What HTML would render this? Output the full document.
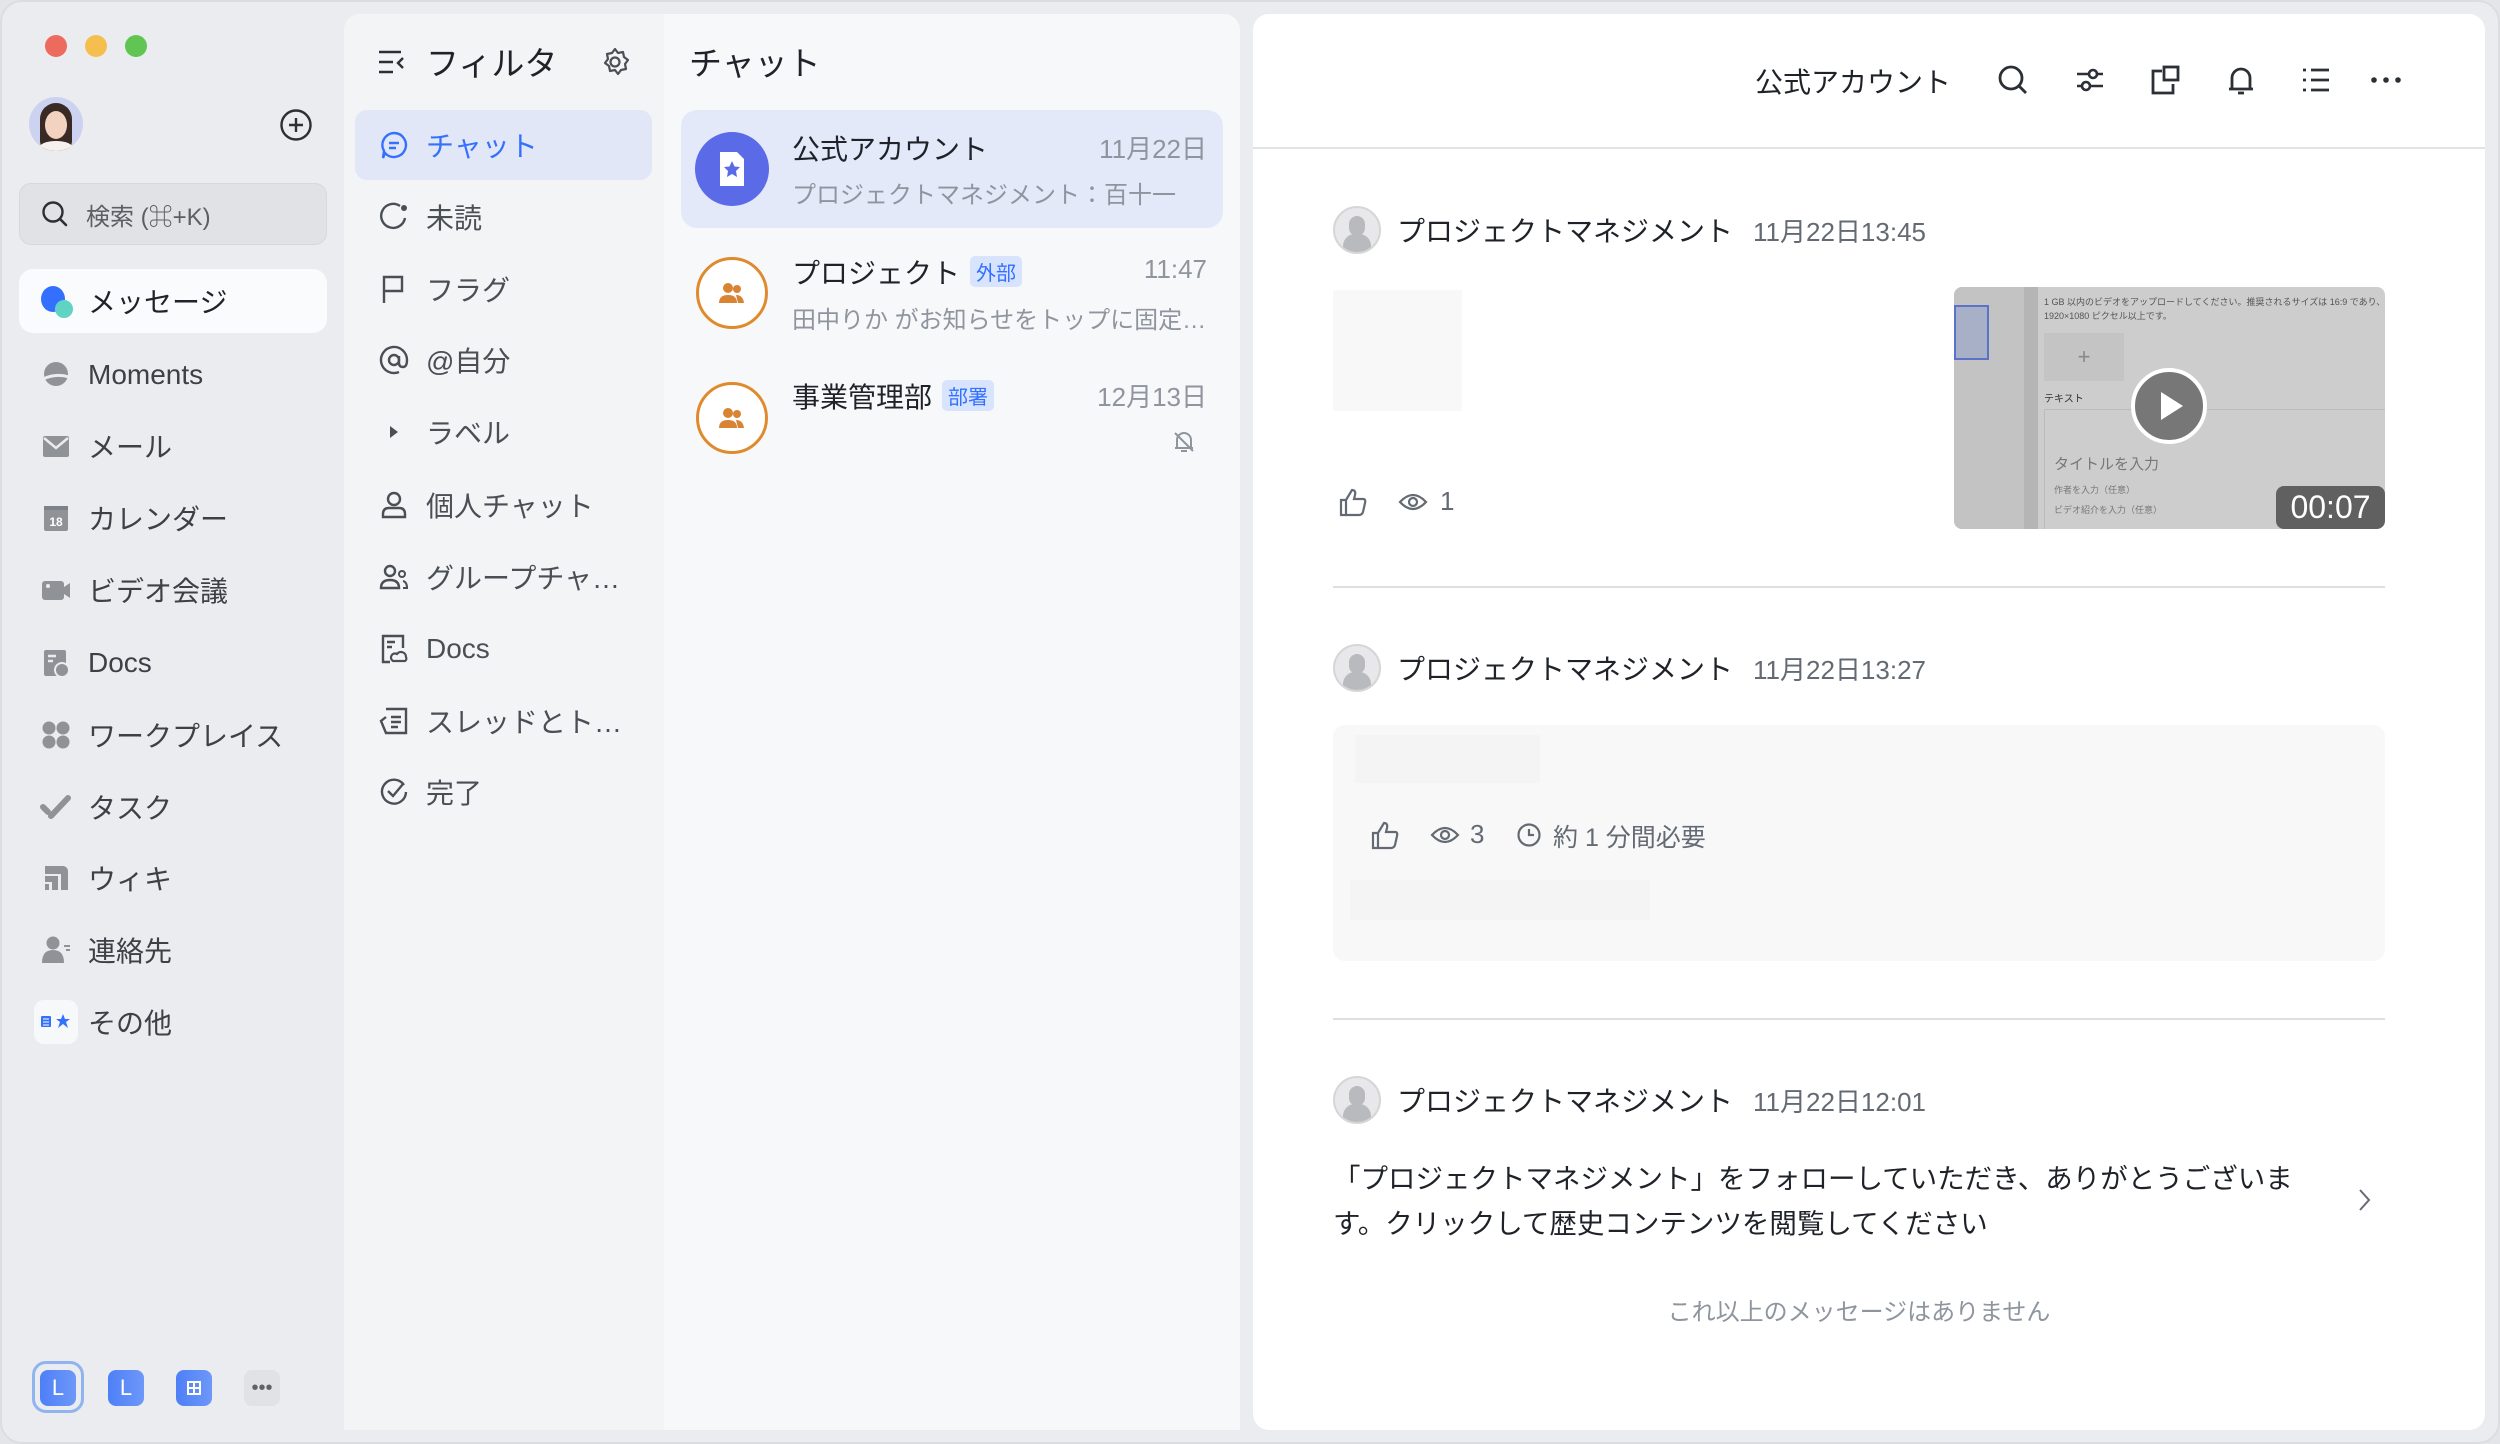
<!DOCTYPE html>
<html><head><meta charset="utf-8"><style>
*{margin:0;padding:0;box-sizing:border-box}
body{width:2500px;height:1444px;background:#e4e5e8;font-family:"Liberation Sans","Noto Sans CJK JP",sans-serif;overflow:hidden;position:relative;color:#1f2329}
.win{position:absolute;left:0;top:0;width:2500px;height:1444px;background:#ebecef;border-radius:22px;border:2px solid #dcdde0}
.a{position:absolute;white-space:nowrap}
.dot{position:absolute;width:22px;height:22px;border-radius:50%;top:35px}
.nav{position:absolute;left:88px;font-size:28px;color:#3c4047;transform:translateY(-50%)}
.ni{position:absolute;left:40px;width:32px;height:32px;transform:translateY(-50%)}
.fl{position:absolute;left:426px;font-size:28px;color:#4a4f56;transform:translateY(-50%)}
.fi{position:absolute;left:378px;width:32px;height:32px;transform:translateY(-50%)}
.tag{display:inline-block;font-size:20px;color:#3370ff;background:#d8e4fe;border-radius:5px;padding:1px 6px;vertical-align:3px;margin-left:10px}
.gray{color:#8f959e}
.hdr{position:absolute;left:1333px;height:48px;display:flex;align-items:center}
.hdr .av{width:48px;height:48px;border-radius:50%;background:#e8e8ea;border:2px solid #d6d6d8;overflow:hidden;position:relative}
.hdr .nm{font-size:28px;margin-left:16px;color:#1f2329}
.hdr .tm{font-size:26px;margin-left:20px;color:#646a73}
.sep{position:absolute;left:1333px;width:1052px;height:2px;background:#dedfe1}
svg{display:block}
</style></head><body>
<div class="win"></div>
<div class="dot" style="left:45px;background:#ed6a5e"></div>
<div class="dot" style="left:85px;background:#f5bf4f"></div>
<div class="dot" style="left:125px;background:#61c554"></div>
<div class="a" style="left:29px;top:97px;width:54px;height:54px;border-radius:50%;background:#cbd3f0;overflow:hidden">
<div style="position:absolute;left:11px;top:6px;width:32px;height:48px;border-radius:16px 16px 10px 10px;background:#3a2a25"></div>
<div style="position:absolute;left:16px;top:14px;width:22px;height:28px;border-radius:50%;background:#f3d2c0"></div>
<div style="position:absolute;left:10px;top:44px;width:34px;height:14px;border-radius:50%;background:#f6f0ee"></div></div>
<svg class="a" style="left:279px;top:108px" width="34" height="34" viewBox="0 0 34 34"><circle cx="17" cy="17" r="14.5" fill="none" stroke="#2b2f36" stroke-width="2.4"/><path d="M17 10v14M10 17h14" stroke="#2b2f36" stroke-width="2.4"/></svg>
<div class="a" style="left:19px;top:183px;width:308px;height:62px;border-radius:12px;background:#e1e2e5;border:1px solid #d7d8db"></div>
<svg class="a" style="left:40px;top:199px" width="30" height="30" viewBox="0 0 30 30"><circle cx="13" cy="13" r="9.5" fill="none" stroke="#2b2f36" stroke-width="2.4"/><path d="M20 20l6 6" stroke="#2b2f36" stroke-width="2.6" stroke-linecap="round"/></svg>
<div class="a" style="left:86px;top:197px;font-size:24px;color:#5a5f66">検索 (⌘+K)</div>
<div class="a" style="left:19px;top:269px;width:308px;height:64px;border-radius:14px;background:#fafbfc"></div>
<svg class="a" style="left:38px;top:284px" width="38" height="36" viewBox="0 0 38 36"><ellipse cx="15" cy="15" rx="12" ry="13" fill="#3370ff"/><circle cx="26" cy="25" r="9" fill="#5fd3c4"/></svg>
<div class="nav" style="top:301px;color:#1f2329">メッセージ</div>
<svg class="ni" style="top:375px" viewBox="0 0 32 32"><circle cx="16" cy="15" r="12" fill="#8f9297"/><path d="M3 20q13 -6 26 -2" stroke="#ebecef" stroke-width="3" fill="none"/></svg>
<div class="nav" style="top:375px">Moments</div>
<svg class="ni" style="top:446px" viewBox="0 0 32 32"><rect x="3" y="6" width="26" height="21" rx="2" fill="#8f9297"/><path d="M4 8l12 10 12-10" stroke="#ebecef" stroke-width="2.5" fill="none"/></svg>
<div class="nav" style="top:446px">メール</div>
<svg class="ni" style="top:518px" viewBox="0 0 32 32"><rect x="4" y="4" width="24" height="25" rx="2" fill="#8f9297"/><rect x="4" y="4" width="24" height="4" fill="#7e8187"/><text x="16" y="24" font-size="12" font-weight="bold" fill="#fff" text-anchor="middle" font-family="Liberation Sans">18</text></svg>
<div class="nav" style="top:518px">カレンダー</div>
<svg class="ni" style="top:590px" viewBox="0 0 32 32"><rect x="2" y="7" width="22" height="19" rx="3" fill="#8f9297"/><path d="M24 13l6-4v15l-6-4z" fill="#8f9297"/><circle cx="8" cy="12" r="2" fill="#ebecef"/></svg>
<div class="nav" style="top:590px">ビデオ会議</div>
<svg class="ni" style="top:663px" viewBox="0 0 32 32"><rect x="4" y="3" width="22" height="26" rx="2" fill="#8f9297"/><circle cx="22" cy="23" r="7" fill="#8f9297" stroke="#ebecef" stroke-width="2"/><path d="M8 9h8M8 14h5" stroke="#ebecef" stroke-width="2.5"/></svg>
<div class="nav" style="top:663px">Docs</div>
<svg class="ni" style="top:735px" viewBox="0 0 32 32"><circle cx="9" cy="9" r="6.5" fill="#8f9297"/><circle cx="23" cy="9" r="6.5" fill="#8f9297"/><circle cx="9" cy="23" r="6.5" fill="#8f9297"/><circle cx="23" cy="23" r="6.5" fill="#8f9297"/></svg>
<div class="nav" style="top:735px">ワークプレイス</div>
<svg class="ni" style="top:807px" viewBox="0 0 32 32"><path d="M3 16l5 5M11 25l17-18" stroke="#8f9297" stroke-width="6" stroke-linecap="round"/></svg>
<div class="nav" style="top:807px">タスク</div>
<svg class="ni" style="top:878px" viewBox="0 0 32 32"><path d="M5 4h18a5 5 0 0 1 5 5v19h-7V12H5zM5 14h13v14h-6v-8H5zM5 22h4v6H5z" fill="#8f9297"/></svg>
<div class="nav" style="top:878px">ウィキ</div>
<svg class="ni" style="top:950px" viewBox="0 0 32 32"><circle cx="13" cy="9" r="6.5" fill="#8f9297"/><path d="M2 29q0-13 11-13t11 13z" fill="#8f9297"/><path d="M24 12h6M26 16h4" stroke="#8f9297" stroke-width="2"/></svg>
<div class="nav" style="top:950px">連絡先</div>
<div class="a" style="left:34px;top:1000px;width:44px;height:44px;border-radius:10px;background:#f7f8fa"></div>
<svg class="a" style="left:38px;top:1010px" width="36" height="24" viewBox="0 0 36 24"><rect x="3" y="6" width="10" height="11" rx="1" fill="#3370ff"/><path d="M5 9h6M5 12h6M5 15h6" stroke="#fff" stroke-width="1"/><path d="M25 4l2 5h5l-4 3 2 6-5-4-5 4 2-6-4-3h5z" fill="#3370ff"/></svg>
<div class="nav" style="top:1022px">その他</div>
<div class="a" style="left:32px;top:1361px;width:52px;height:52px;border-radius:14px;border:3px solid #8fb4f0"></div>
<div class="a" style="left:40px;top:1370px;width:36px;height:36px;border-radius:8px;background:linear-gradient(90deg,#4e7ff7,#6d98f9);color:#fff;font-size:22px;text-align:center;line-height:36px">L</div>
<div class="a" style="left:108px;top:1370px;width:36px;height:36px;border-radius:8px;background:linear-gradient(90deg,#4e7ff7,#6d98f9);color:#fff;font-size:22px;text-align:center;line-height:36px">L</div>
<div class="a" style="left:176px;top:1370px;width:36px;height:36px;border-radius:8px;background:linear-gradient(90deg,#4e7ff7,#6d98f9)"><svg width="36" height="36" viewBox="0 0 36 36"><rect x="12" y="12" width="12" height="12" fill="none" stroke="#fff" stroke-width="2"/><path d="M18 12v12M12 18h12" stroke="#fff" stroke-width="2"/></svg></div>
<div class="a" style="left:244px;top:1370px;width:36px;height:36px;border-radius:8px;background:#e1e2e5;color:#5f6368;font-size:20px;text-align:center;line-height:36px">•••</div>

<div class="a" style="left:344px;top:14px;width:896px;height:1416px;border-radius:16px 16px 0 0;background:#f7f8fa"></div>
<div class="a" style="left:344px;top:14px;width:320px;height:1416px;border-radius:16px 0 0 0;background:#f3f4f6"></div>
<svg class="a" style="left:376px;top:46px" width="32" height="32" viewBox="0 0 32 32"><path d="M3 6h22M3 16h14M3 26h14" stroke="#2b2f36" stroke-width="2.4"/><path d="M27 12l-5 5 5 5" stroke="#2b2f36" stroke-width="2.4" fill="none"/></svg>
<div class="a" style="left:426px;top:37px;font-size:33px;color:#1f2329">フィルタ</div>
<svg class="a" style="left:599px;top:46px" width="32" height="32" viewBox="0 0 32 32"><circle cx="16" cy="16" r="4.5" fill="none" stroke="#4a4f56" stroke-width="2.2"/><path d="M16 3l3 4 5-1 1 5 4 3-3 4 1 5-5 1-3 4-3-4-5 1-1-5-4-3 3-4-1-5 5-1z" fill="none" stroke="#4a4f56" stroke-width="2.2" stroke-linejoin="round"/></svg>
<div class="a" style="left:355px;top:110px;width:297px;height:70px;border-radius:12px;background:#e1e7f6"></div>
<svg class="fi" style="top:145px" viewBox="0 0 32 32"><path d="M16 4a12 12 0 1 1-9 20l-2 5 1-7A12 12 0 0 1 16 4z" fill="none" stroke="#3370ff" stroke-width="2.4"/><path d="M11 14h10M11 19h7" stroke="#3370ff" stroke-width="2.4"/></svg>
<div class="fl" style="top:145px;color:#3370ff">チャット</div>
<svg class="fi" style="top:217px" viewBox="0 0 32 32"><path d="M22 5A12 12 0 1 0 27 17" fill="none" stroke="#4a4f56" stroke-width="2.4"/><circle cx="26" cy="7" r="3" fill="#4a4f56"/></svg>
<div class="fl" style="top:217px">未読</div>
<svg class="fi" style="top:289px" viewBox="0 0 32 32"><path d="M6 30V4h18v14H6" fill="none" stroke="#4a4f56" stroke-width="2.4"/></svg>
<div class="fl" style="top:289px">フラグ</div>
<svg class="fi" style="top:360px" viewBox="0 0 32 32"><circle cx="16" cy="16" r="5" fill="none" stroke="#4a4f56" stroke-width="2.4"/><path d="M21 12v7q0 4 4 4t4-7A13 13 0 1 0 21 28" fill="none" stroke="#4a4f56" stroke-width="2.4"/></svg>
<div class="fl" style="top:360px">@自分</div>
<svg class="fi" style="top:432px" viewBox="0 0 32 32"><path d="M12 10l8 6-8 6z" fill="#4a4f56"/></svg>
<div class="fl" style="top:432px">ラベル</div>
<svg class="fi" style="top:505px" viewBox="0 0 32 32"><circle cx="16" cy="10" r="6" fill="none" stroke="#4a4f56" stroke-width="2.4"/><path d="M5 28v-3q0-6 6-6h10q6 0 6 6v3z" fill="none" stroke="#4a4f56" stroke-width="2.4"/></svg>
<div class="fl" style="top:505px">個人チャット</div>
<svg class="fi" style="top:577px" viewBox="0 0 32 32"><circle cx="12" cy="10" r="5" fill="none" stroke="#4a4f56" stroke-width="2.4"/><path d="M3 27q0-8 9-8t9 8z" fill="none" stroke="#4a4f56" stroke-width="2.4"/><circle cx="24" cy="13" r="3" fill="none" stroke="#4a4f56" stroke-width="2"/><path d="M25 20q4 1 4 7h-4" fill="none" stroke="#4a4f56" stroke-width="2"/></svg>
<div class="fl" style="top:577px">グループチャ…</div>
<svg class="fi" style="top:649px" viewBox="0 0 32 32"><path d="M12 29H5V3h20v12" fill="none" stroke="#4a4f56" stroke-width="2.4"/><path d="M9 9h8M9 14h5" stroke="#4a4f56" stroke-width="2.4"/><path d="M15 28a4 4 0 0 1 4-7a5 5 0 0 1 9 3a3 3 0 0 1-1 4z" fill="none" stroke="#4a4f56" stroke-width="2.2"/></svg>
<div class="fl" style="top:649px">Docs</div>
<svg class="fi" style="top:721px" viewBox="0 0 32 32"><path d="M8 4h20v24H8l-5-12 5-4" fill="none" stroke="#4a4f56" stroke-width="2.4"/><path d="M13 12h10M13 17h10M13 22h7" stroke="#4a4f56" stroke-width="2.4"/></svg>
<div class="fl" style="top:721px">スレッドとト…</div>
<svg class="fi" style="top:792px" viewBox="0 0 32 32"><path d="M26 9A12 12 0 1 0 28 16" fill="none" stroke="#4a4f56" stroke-width="2.4"/><path d="M10 15l5 5 10-12" fill="none" stroke="#4a4f56" stroke-width="2.4"/></svg>
<div class="fl" style="top:792px">完了</div>

<div class="a" style="left:689px;top:37px;font-size:33px">チャット</div>
<div class="a" style="left:681px;top:110px;width:542px;height:118px;border-radius:16px;background:#e3e9f9"></div>
<div class="a" style="left:695px;top:132px;width:74px;height:74px;border-radius:50%;background:#5b6ae6"></div>
<svg class="a" style="left:712px;top:148px" width="40" height="42" viewBox="0 0 40 42"><path d="M8 4h17l7 7v27H8z" fill="#fff"/><path d="M20 13l2.5 5.5 5.5.5-4 4 1 6-5-3-5 3 1-6-4-4 5.5-.5z" fill="#5b6ae6"/></svg>
<div class="a" style="left:792px;top:128px;font-size:28px">公式アカウント</div>
<div class="a gray" style="right:1293px;top:129px;font-size:26px">11月22日</div>
<div class="a gray" style="left:792px;top:175px;font-size:24px">プロジェクトマネジメント：百十一</div>

<div class="a" style="left:696px;top:257px;width:72px;height:72px;border-radius:50%;border:3px solid #e08a2e;background:#fff"></div>
<svg class="a" style="left:716px;top:277px" width="32" height="32" viewBox="0 0 32 32"><circle cx="12" cy="11" r="5" fill="#d98432"/><circle cx="21" cy="12" r="4" fill="#d98432"/><path d="M3 26q0-8 9-8t9 8z" fill="#d98432"/><path d="M20 18q7 0 8 8h-6z" fill="#d98432"/></svg>
<div class="a" style="left:792px;top:252px;font-size:28px">プロジェクト<span class="tag">外部</span></div>
<div class="a gray" style="right:1293px;top:254px;font-size:26px">11:47</div>
<div class="a gray" style="left:792px;top:300px;font-size:24px">田中りか がお知らせをトップに固定…</div>

<div class="a" style="left:696px;top:382px;width:72px;height:72px;border-radius:50%;border:3px solid #e08a2e;background:#fff"></div>
<svg class="a" style="left:716px;top:402px" width="32" height="32" viewBox="0 0 32 32"><circle cx="12" cy="11" r="5" fill="#d98432"/><circle cx="21" cy="12" r="4" fill="#d98432"/><path d="M3 26q0-8 9-8t9 8z" fill="#d98432"/><path d="M20 18q7 0 8 8h-6z" fill="#d98432"/></svg>
<div class="a" style="left:792px;top:376px;font-size:28px">事業管理部<span class="tag">部署</span></div>
<div class="a gray" style="right:1293px;top:377px;font-size:26px">12月13日</div>
<svg class="a" style="left:1171px;top:429px" width="26" height="26" viewBox="0 0 26 26"><path d="M6 19V11a7 7 0 0 1 14 0v8zM4 19h18M10 22h6M4 4l18 18" stroke="#8f959e" stroke-width="2" fill="none"/></svg>

<div class="a" style="left:1253px;top:14px;width:1232px;height:1416px;border-radius:16px;background:#fff"></div>
<div class="a" style="left:1253px;top:147px;width:1232px;height:2px;background:#e2e3e5"></div>
<div class="a" style="right:549px;top:61px;font-size:28px">公式アカウント</div>
<svg class="a" style="left:1996px;top:63px" width="34" height="34" viewBox="0 0 34 34"><circle cx="15" cy="15" r="11" fill="none" stroke="#2b2f36" stroke-width="2.8"/><path d="M23 23l7 7" stroke="#2b2f36" stroke-width="2.8"/></svg>
<svg class="a" style="left:2073px;top:63px" width="34" height="34" viewBox="0 0 34 34"><path d="M4 11h26M4 23h26" stroke="#2b2f36" stroke-width="2.6"/><circle cx="20" cy="11" r="4" fill="#fff" stroke="#2b2f36" stroke-width="2.6"/><circle cx="13" cy="23" r="4" fill="#fff" stroke="#2b2f36" stroke-width="2.6"/></svg>
<svg class="a" style="left:2148px;top:63px" width="34" height="34" viewBox="0 0 34 34"><path d="M14 8H5v22h20v-9" fill="none" stroke="#2b2f36" stroke-width="2.8"/><rect x="16" y="4" width="14" height="13" fill="none" stroke="#2b2f36" stroke-width="2.8"/></svg>
<svg class="a" style="left:2224px;top:63px" width="34" height="34" viewBox="0 0 34 34"><path d="M8 26V15a9 9 0 0 1 18 0v11zM5 26h24" fill="none" stroke="#2b2f36" stroke-width="2.8"/><path d="M14 30h6" stroke="#2b2f36" stroke-width="2.8"/></svg>
<svg class="a" style="left:2299px;top:63px" width="34" height="34" viewBox="0 0 34 34"><path d="M4 7h3M4 17h3M4 27h3M12 7h18M12 17h18M12 27h18" stroke="#2b2f36" stroke-width="2.8"/></svg>
<svg class="a" style="left:2369px;top:63px" width="34" height="34" viewBox="0 0 34 34"><circle cx="5" cy="17" r="2.8" fill="#2b2f36"/><circle cx="17" cy="17" r="2.8" fill="#2b2f36"/><circle cx="29" cy="17" r="2.8" fill="#2b2f36"/></svg>

<div class="hdr" style="top:206px"><div class="av"><div style="position:absolute;left:14px;top:8px;width:16px;height:20px;border-radius:8px;background:#b9babd"></div><div style="position:absolute;left:8px;top:26px;width:28px;height:22px;border-radius:12px 12px 0 0;background:#b9babd"></div></div><span class="nm">プロジェクトマネジメント</span><span class="tm">11月22日13:45</span></div>
<div class="a" style="left:1333px;top:290px;width:129px;height:121px;background:#f8f8f8"></div>
<svg class="a" style="left:1338px;top:486px" width="30" height="32" viewBox="0 0 30 32"><path d="M3 14h5v15H3zM8 14l6-10q4 0 3 5l-1 4h9q3 0 2 4l-2 9q-1 3-4 3H8" fill="none" stroke="#646a73" stroke-width="2.2"/></svg>
<svg class="a" style="left:1398px;top:488px" width="30" height="28" viewBox="0 0 30 28"><path d="M2 14q13-14 26 0q-13 14-26 0z" fill="none" stroke="#646a73" stroke-width="2.2"/><circle cx="15" cy="14" r="4" fill="none" stroke="#646a73" stroke-width="2.2"/></svg>
<div class="a" style="left:1440px;top:486px;font-size:26px;color:#646a73">1</div>
<div class="a" style="left:1954px;top:287px;width:431px;height:242px;border-radius:8px;background:#cdcdcd;overflow:hidden">
<div style="position:absolute;left:0;top:0;width:70px;height:242px;background:#c3c3c3"></div>
<div style="position:absolute;left:0;top:18px;width:35px;height:55px;background:#a8b0c8;border:2px solid #5a72c8"></div>
<div style="position:absolute;left:70px;top:0;width:14px;height:242px;background:#b5b5b5"></div>
<div style="position:absolute;left:90px;top:8px;font-size:9px;color:#555;line-height:14px">1 GB 以内のビデオをアップロードしてください。推奨されるサイズは 16:9 であり、推奨さ<br>1920×1080 ピクセル以上です。</div>
<div style="position:absolute;left:90px;top:46px;width:80px;height:48px;background:#c4c4c4;color:#888;text-align:center;line-height:48px;font-size:22px">+</div>
<div style="position:absolute;left:90px;top:103px;font-size:10px;color:#333">テキスト</div>
<div style="position:absolute;left:90px;top:122px;width:341px;height:120px;border-top:1px solid #bbb;border-left:1px solid #bbb"></div>
<div style="position:absolute;left:100px;top:166px;font-size:15px;color:#777">タイトルを入力</div>
<div style="position:absolute;left:100px;top:196px;font-size:9px;color:#777">作者を入力（任意）</div>
<div style="position:absolute;left:100px;top:216px;font-size:9px;color:#777">ビデオ紹介を入力（任意）</div>
<div style="position:absolute;left:177px;top:81px;width:76px;height:76px;border-radius:50%;background:#777;border:4px solid #fff"></div>
<svg style="position:absolute;left:177px;top:81px" width="76" height="76" viewBox="0 0 76 76"><path d="M30 24v28l22-14z" fill="#fff"/></svg>
<div style="position:absolute;right:0;bottom:0;width:109px;height:43px;border-radius:8px;background:#606060;color:#fff;font-size:32px;text-align:center;line-height:43px">00:07</div>
</div>
<div class="sep" style="top:586px"></div>

<div class="hdr" style="top:644px"><div class="av"><div style="position:absolute;left:14px;top:8px;width:16px;height:20px;border-radius:8px;background:#b9babd"></div><div style="position:absolute;left:8px;top:26px;width:28px;height:22px;border-radius:12px 12px 0 0;background:#b9babd"></div></div><span class="nm">プロジェクトマネジメント</span><span class="tm">11月22日13:27</span></div>
<div class="a" style="left:1333px;top:725px;width:1052px;height:236px;border-radius:12px;background:#f8f8f8"></div>
<div class="a" style="left:1355px;top:735px;width:185px;height:48px;background:#f4f4f4"></div>
<div class="a" style="left:1350px;top:880px;width:300px;height:40px;background:#f4f4f4"></div>
<svg class="a" style="left:1370px;top:819px" width="30" height="32" viewBox="0 0 30 32"><path d="M3 14h5v15H3zM8 14l6-10q4 0 3 5l-1 4h9q3 0 2 4l-2 9q-1 3-4 3H8" fill="none" stroke="#646a73" stroke-width="2.2"/></svg>
<svg class="a" style="left:1430px;top:821px" width="30" height="28" viewBox="0 0 30 28"><path d="M2 14q13-14 26 0q-13 14-26 0z" fill="none" stroke="#646a73" stroke-width="2.2"/><circle cx="15" cy="14" r="4" fill="none" stroke="#646a73" stroke-width="2.2"/></svg>
<div class="a" style="left:1470px;top:819px;font-size:26px;color:#646a73">3</div>
<svg class="a" style="left:1516px;top:822px" width="26" height="26" viewBox="0 0 26 26"><circle cx="13" cy="13" r="10.5" fill="none" stroke="#646a73" stroke-width="2.2"/><path d="M13 7v6h5" fill="none" stroke="#646a73" stroke-width="2.2"/></svg>
<div class="a" style="left:1553px;top:818px;font-size:25px;color:#646a73">約 1 分間必要</div>
<div class="sep" style="top:1018px"></div>

<div class="hdr" style="top:1076px"><div class="av"><div style="position:absolute;left:14px;top:8px;width:16px;height:20px;border-radius:8px;background:#b9babd"></div><div style="position:absolute;left:8px;top:26px;width:28px;height:22px;border-radius:12px 12px 0 0;background:#b9babd"></div></div><span class="nm">プロジェクトマネジメント</span><span class="tm">11月22日12:01</span></div>
<div class="a" style="left:1333px;top:1156px;font-size:27.5px;line-height:45px;color:#1f2329">「プロジェクトマネジメント」をフォローしていただき、ありがとうございま<br>す。クリックして歴史コンテンツを閲覧してください</div>
<svg class="a" style="left:2356px;top:1187px" width="16" height="26" viewBox="0 0 16 26"><path d="M4 3l9 10-9 10" fill="none" stroke="#646a73" stroke-width="2"/></svg>
<div class="a" style="left:1859px;top:1292px;transform:translateX(-50%);font-size:24px;color:#8f959e">これ以上のメッセージはありません</div>
</body></html>
